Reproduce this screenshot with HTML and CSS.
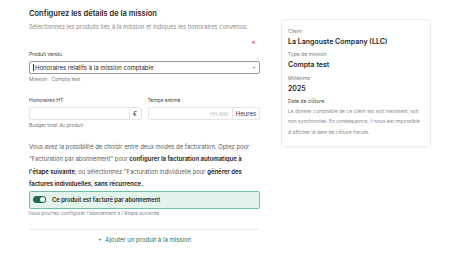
FILE: index.html
```html
<!DOCTYPE html>
<html lang="fr">
<head>
<meta charset="utf-8">
<title>Configurez les détails de la mission</title>
<link rel="stylesheet" href="styles.css">
</head>
<body>
<div class="page">
  <div class="main">
    <h1 class="title">Configurez les détails de la mission</h1>
    <p class="subtitle">Sélectionnez les produits liés à la mission et indiquez les honoraires convenus.</p>
    <div class="remove-row"><span class="remove">×</span></div>

    <label class="label label-first">Produit vendu</label>
    <div class="select">
      <span class="select-text">Honoraires relatifs à la mission comptable</span>
      <span class="caret">▾</span>
    </div>
    <p class="hint">Mission : Compta test</p>

    <div class="fields">
      <div class="field">
        <label class="label">Honoraires HT</label>
        <div class="input">
          <span class="input-value"></span>
          <span class="addon addon-euro">€</span>
        </div>
        <p class="hint">Budget total du produit</p>
      </div>
      <div class="field">
        <label class="label">Temps estimé</label>
        <div class="input">
          <span class="input-value placeholder">HH:MM</span>
          <span class="addon addon-hours">Heures</span>
        </div>
      </div>
    </div>

    <p class="explain">Vous avez la possibilité de choisir entre deux modes de facturation. Optez pour "Facturation par abonnement" pour <strong>configurer la facturation automatique à</strong> <strong>l'étape suivante</strong>, ou sélectionnez "Facturation individuelle pour <strong>générer des</strong> <strong>factures individuelles, sans récurrence.</strong></p>

    <div class="toggle-box">
      <span class="switch"><span class="knob"></span></span>
      <span class="toggle-text">Ce produit est facturé par abonnement</span>
    </div>
    <p class="hint hint-small">Vous pourrez configurer l'abonement à l'étape suivante</p>

    <div class="separator"></div>
    <div class="add-row"><span class="add">+&nbsp;&nbsp;Ajouter un produit à la mission</span></div>
  </div>

  <aside class="card">
    <div class="info-label info-first">Client</div>
    <div class="info-value">La Langouste Company (LLC)</div>
    <div class="info-label">Type de mission</div>
    <div class="info-value">Compta test</div>
    <div class="info-label">Millésime</div>
    <div class="info-value">2025</div>
    <div class="info-label info-dark">Date de clôture</div>
    <p class="info-text">Le dossier comptable de ce client est soit inexistant, soit non synchronisé. En conséquence, il nous est impossible d'afficher la date de clôture fiscale.</p>
  </aside>
</div>
</body>
</html>
```

FILE: styles.css
```css
html, body {
  margin: 0;
  padding: 0;
  background: #ffffff;
}

body {
  font-family: Inter, "Noto Sans", "Liberation Sans", sans-serif;
  color: #222;
}

.page {
  display: flex;
  align-items: flex-start;
  gap: 21px;
  padding: 9px 19px 0 29px;
}

.main {
  width: 231px;
  display: flex;
  flex-direction: column;
}

.title {
  margin: 0;
  font-size: 7.5px;
  line-height: 10px;
  font-weight: 600;
  color: #1f1f1f;
}

.subtitle {
  margin: 4px 0 0;
  font-size: 5.9px;
  line-height: 8px;
  color: #8a8a8a;
}

.remove-row {
  display: flex;
  justify-content: flex-end;
  margin-top: 7px;
  padding-right: 4px;
  height: 8px;
}

.remove {
  font-size: 7px;
  line-height: 8px;
  color: #d9333f;
}

.label {
  display: block;
  margin-top: 4.5px;
  font-size: 5px;
  line-height: 7px;
  color: #3a3a3a;
}

.select {
  margin-top: 3.5px;
  height: 13px;
  box-sizing: border-box;
  border: 1px solid #9a9a9a;
  border-radius: 2px;
  display: flex;
  align-items: center;
  justify-content: space-between;
  padding: 0 4px 0 3px;
}

.select-text {
  font-size: 6px;
  color: #222;
  border-left: 0.6px solid #333;
  padding-left: 1px;
  line-height: 7px;
}

.caret {
  font-size: 4px;
  color: #777;
}

.hint {
  margin: 1.5px 0 0;
  font-size: 5px;
  line-height: 7px;
  color: #7a7a7a;
}

.fields {
  display: flex;
  gap: 6px;
  margin-top: 9.5px;
}

.field {
  flex: 1;
  display: flex;
  flex-direction: column;
}

.input {
  margin-top: 3.5px;
  height: 13px;
  box-sizing: border-box;
  border: 1px solid #e4e4e4;
  border-radius: 2px;
  display: flex;
  align-items: stretch;
}

.input-value {
  flex: 1;
  display: flex;
  align-items: center;
  justify-content: flex-end;
  padding-right: 4px;
  font-size: 5px;
}

.placeholder {
  color: #bdbdbd;
}

.addon {
  display: flex;
  align-items: center;
  justify-content: center;
  border-left: 1px solid #e4e4e4;
  font-size: 6px;
  color: #333;
}

.addon-euro {
  width: 11px;
}

.addon-hours {
  width: 26px;
}

.explain {
  margin: 12px 0 0;
  font-size: 5.9px;
  line-height: 12.6px;
  color: #5a5a5a;
}

.explain strong {
  font-weight: 700;
  color: #333;
}

.toggle-box {
  margin-top: 0;
  height: 18px;
  box-sizing: border-box;
  border: 1px solid #6cc0a4;
  border-radius: 2px;
  background: #e2f3ec;
  display: flex;
  align-items: center;
  padding-left: 3px;
  gap: 6px;
}

.switch {
  width: 13px;
  height: 7px;
  border-radius: 4px;
  background: #23694f;
  display: flex;
  align-items: center;
  justify-content: flex-end;
  padding: 0 1px;
  box-sizing: border-box;
}

.knob {
  width: 5px;
  height: 5px;
  border-radius: 50%;
  background: #ffffff;
}

.toggle-text {
  font-size: 5.8px;
  font-weight: 600;
  color: #1f1f1f;
}

.hint-small {
  margin-top: 1.2px;
  margin-left: -1px;
  font-size: 5px;
  line-height: 6.5px;
  color: #888;
}

.separator {
  margin-top: 12.5px;
  height: 1px;
  background: #ececec;
}

.add-row {
  display: flex;
  justify-content: center;
  margin-top: 6px;
}

.add {
  font-size: 6px;
  line-height: 8px;
  color: #1f6b57;
}

.card {
  margin-top: 10px;
  width: 150px;
  box-sizing: border-box;
  border: 1px solid #ececec;
  border-radius: 3px;
  box-shadow: 0 1px 2px rgba(0, 0, 0, 0.04);
  padding: 7.5px 6px 9px 6px;
}

.info-label {
  margin-top: 5.5px;
  font-size: 5px;
  line-height: 7px;
  color: #7d7d7d;
}

.info-first {
  margin-top: 0;
}

.info-dark {
  color: #444;
}

.info-value {
  margin-top: 2px;
  font-size: 7px;
  line-height: 9px;
  font-weight: 600;
  color: #1f1f1f;
}

.info-text {
  margin: 1px 0 0;
  font-size: 4.9px;
  line-height: 10.3px;
  color: #8a8a8a;
}
```
